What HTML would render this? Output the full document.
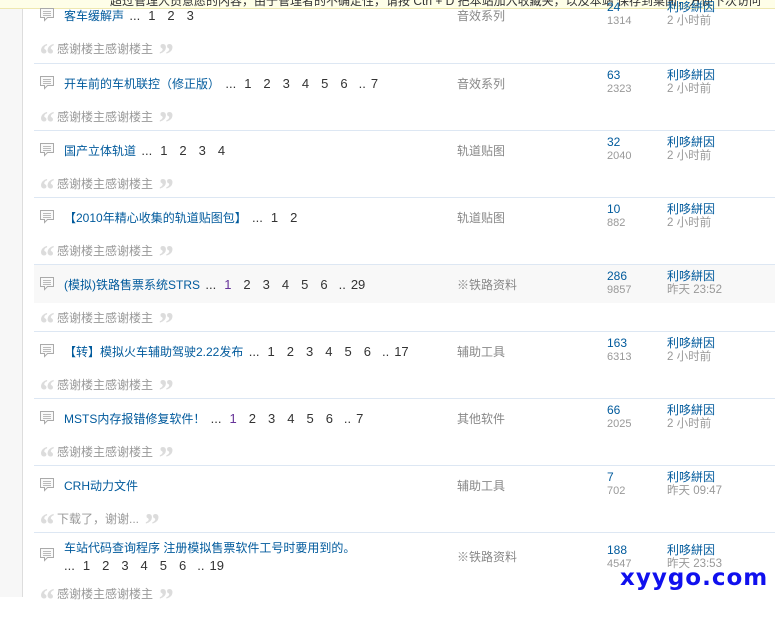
<!DOCTYPE html>
<html><head><meta charset="utf-8"><style>
*{margin:0;padding:0;box-sizing:border-box}
body{width:775px;height:597px;overflow:hidden;background:#fff;position:relative;font-family:"Liberation Sans","Noto Sans CJK SC",sans-serif;font-size:12px}
.left{position:absolute;left:0;top:0;width:23px;height:597px;background:#f7f7f7;border-right:1px solid #ddd}
.top{position:absolute;left:0;top:0;width:775px;height:9px;background:#fefee8;border-bottom:1px solid #eee8b0;overflow:hidden}
.top span{position:absolute;top:-8px;left:110px;white-space:nowrap;color:#333;font-size:12px}
.row{position:absolute;left:34px;width:741px;height:67px;border-top:1px solid #dde7f3}
.hl{position:absolute;left:0;top:0;width:741px;height:38px;background:#f8f8f8}
.ic{position:absolute;left:5px;top:11px;width:16px;height:16px}
.t{position:absolute;left:30px;top:12px;color:#005a9c;white-space:nowrap;line-height:16px}
.t i{font-style:normal;color:#333;margin-left:2px;margin-right:-4px;font-size:13px}
.t b{font-weight:normal;color:#333;margin-left:12px;font-size:13px}
.t b.v{color:#639}
.t b.d{margin-left:11px}
.t b.e{margin-left:5px}
.cat{position:absolute;left:423px;top:12px;color:#888;line-height:16px}
.n{position:absolute;left:573px;top:4px;color:#005a9c;line-height:14px}
.n2{position:absolute;left:573px;top:18px;color:#999;line-height:14px;font-size:11px}
.a{position:absolute;left:633px;top:4px;color:#005a9c;line-height:14px}
.a2{position:absolute;left:633px;top:18px;color:#999;line-height:14px;font-size:11.5px}
.q{position:absolute;left:4px;top:45px;color:#999;line-height:16px;white-space:nowrap}
.q s,.q u{text-decoration:none;color:#dcdcdc;font-size:32px;font-weight:bold;font-family:"Liberation Serif",serif;vertical-align:-12px;line-height:16px;display:inline-block;width:18px}
.q s{margin-right:1px;font-style:italic}
.q u{margin-left:4px;font-style:italic}
.wm{position:absolute;left:620px;top:564px;font-size:23px;font-weight:bold;color:#1010ee;font-family:"DejaVu Sans","Liberation Sans",sans-serif;letter-spacing:1px;line-height:28px}
</style></head><body>
<div class="left"></div>
<div class="top"><span>超过管理人员意愿的内容，由于管理者的不确定性，请按 Ctrl + D 把本站加入收藏夹，以及本站 保存到桌面，方便下次访问</span></div>

<div class="row" style="top:-4px;border-top:none">
<svg class="ic" viewBox="0 0 16 16"><path d="M1.5 1.5h13v9h-6l-3 3v-3h-4z" fill="#fafafa" stroke="#aaa"/><path d="M4 4.5h8M4 6.5h8M4 8.5h8" stroke="#bbb"/></svg>
<div class="t">客车缓解声 <i>...</i><b>1</b><b>2</b><b>3</b></div>
<div class="cat">音效系列</div><div class="n">24</div><div class="n2">1314</div><div class="a">利哆絣因</div><div class="a2">2 小时前</div>
<div class="q"><s>“</s>感谢楼主感谢楼主<u>”</u></div></div>

<div class="row" style="top:63px">
<svg class="ic" viewBox="0 0 16 16"><path d="M1.5 1.5h13v9h-6l-3 3v-3h-4z" fill="#fafafa" stroke="#aaa"/><path d="M4 4.5h8M4 6.5h8M4 8.5h8" stroke="#bbb"/></svg>
<div class="t">开车前的车机联控（修正版） <i>...</i><b>1</b><b>2</b><b>3</b><b>4</b><b>5</b><b>6</b><b class="d">..</b><b class="e">7</b></div>
<div class="cat">音效系列</div><div class="n">63</div><div class="n2">2323</div><div class="a">利哆絣因</div><div class="a2">2 小时前</div>
<div class="q"><s>“</s>感谢楼主感谢楼主<u>”</u></div></div>

<div class="row" style="top:130px">
<svg class="ic" viewBox="0 0 16 16"><path d="M1.5 1.5h13v9h-6l-3 3v-3h-4z" fill="#fafafa" stroke="#aaa"/><path d="M4 4.5h8M4 6.5h8M4 8.5h8" stroke="#bbb"/></svg>
<div class="t">国产立体轨道 <i>...</i><b>1</b><b>2</b><b>3</b><b>4</b></div>
<div class="cat">轨道贴图</div><div class="n">32</div><div class="n2">2040</div><div class="a">利哆絣因</div><div class="a2">2 小时前</div>
<div class="q"><s>“</s>感谢楼主感谢楼主<u>”</u></div></div>

<div class="row" style="top:197px">
<svg class="ic" viewBox="0 0 16 16"><path d="M1.5 1.5h13v9h-6l-3 3v-3h-4z" fill="#fafafa" stroke="#aaa"/><path d="M4 4.5h8M4 6.5h8M4 8.5h8" stroke="#bbb"/></svg>
<div class="t">【2010年精心收集的轨道贴图包】 <i>...</i><b>1</b><b>2</b></div>
<div class="cat">轨道贴图</div><div class="n">10</div><div class="n2">882</div><div class="a">利哆絣因</div><div class="a2">2 小时前</div>
<div class="q"><s>“</s>感谢楼主感谢楼主<u>”</u></div></div>

<div class="row" style="top:264px"><div class="hl"></div>
<svg class="ic" viewBox="0 0 16 16"><path d="M1.5 1.5h13v9h-6l-3 3v-3h-4z" fill="#fafafa" stroke="#aaa"/><path d="M4 4.5h8M4 6.5h8M4 8.5h8" stroke="#bbb"/></svg>
<div class="t">(模拟)铁路售票系统STRS <i>...</i><b class="v">1</b><b>2</b><b>3</b><b>4</b><b>5</b><b>6</b><b class="d">..</b><b class="e">29</b></div>
<div class="cat">※铁路资料</div><div class="n">286</div><div class="n2">9857</div><div class="a">利哆絣因</div><div class="a2">昨天 23:52</div>
<div class="q"><s>“</s>感谢楼主感谢楼主<u>”</u></div></div>

<div class="row" style="top:331px">
<svg class="ic" viewBox="0 0 16 16"><path d="M1.5 1.5h13v9h-6l-3 3v-3h-4z" fill="#fafafa" stroke="#aaa"/><path d="M4 4.5h8M4 6.5h8M4 8.5h8" stroke="#bbb"/></svg>
<div class="t">【转】模拟火车辅助驾驶2.22发布 <i>...</i><b>1</b><b>2</b><b>3</b><b>4</b><b>5</b><b>6</b><b class="d">..</b><b class="e">17</b></div>
<div class="cat">辅助工具</div><div class="n">163</div><div class="n2">6313</div><div class="a">利哆絣因</div><div class="a2">2 小时前</div>
<div class="q"><s>“</s>感谢楼主感谢楼主<u>”</u></div></div>

<div class="row" style="top:398px">
<svg class="ic" viewBox="0 0 16 16"><path d="M1.5 1.5h13v9h-6l-3 3v-3h-4z" fill="#fafafa" stroke="#aaa"/><path d="M4 4.5h8M4 6.5h8M4 8.5h8" stroke="#bbb"/></svg>
<div class="t">MSTS内存报错修复软件！ <i>...</i><b class="v">1</b><b>2</b><b>3</b><b>4</b><b>5</b><b>6</b><b class="d">..</b><b class="e">7</b></div>
<div class="cat">其他软件</div><div class="n">66</div><div class="n2">2025</div><div class="a">利哆絣因</div><div class="a2">2 小时前</div>
<div class="q"><s>“</s>感谢楼主感谢楼主<u>”</u></div></div>

<div class="row" style="top:465px">
<svg class="ic" viewBox="0 0 16 16"><path d="M1.5 1.5h13v9h-6l-3 3v-3h-4z" fill="#fafafa" stroke="#aaa"/><path d="M4 4.5h8M4 6.5h8M4 8.5h8" stroke="#bbb"/></svg>
<div class="t">CRH动力文件</div>
<div class="cat">辅助工具</div><div class="n">7</div><div class="n2">702</div><div class="a">利哆絣因</div><div class="a2">昨天 09:47</div>
<div class="q"><s>“</s>下载了，谢谢...<u>”</u></div></div>

<div class="row" style="top:532px">
<svg class="ic" viewBox="0 0 16 16" style="top:14px"><path d="M1.5 1.5h13v9h-6l-3 3v-3h-4z" fill="#fafafa" stroke="#aaa"/><path d="M4 4.5h8M4 6.5h8M4 8.5h8" stroke="#bbb"/></svg>
<div class="t" style="top:7px">车站代码查询程序 注册模拟售票软件工号时要用到的。</div>
<div class="t" style="top:25px;left:28px"><i>...</i><b>1</b><b>2</b><b>3</b><b>4</b><b>5</b><b>6</b><b class="d">..</b><b class="e">19</b></div>
<div class="cat" style="top:16px">※铁路资料</div><div class="n" style="top:10px">188</div><div class="n2" style="top:24px">4547</div><div class="a" style="top:10px">利哆絣因</div><div class="a2" style="top:24px">昨天 23:53</div>
<div class="q" style="top:53px"><s>“</s>感谢楼主感谢楼主<u>”</u></div></div>

<div class="wm">xyygo.com</div>
</body></html>
